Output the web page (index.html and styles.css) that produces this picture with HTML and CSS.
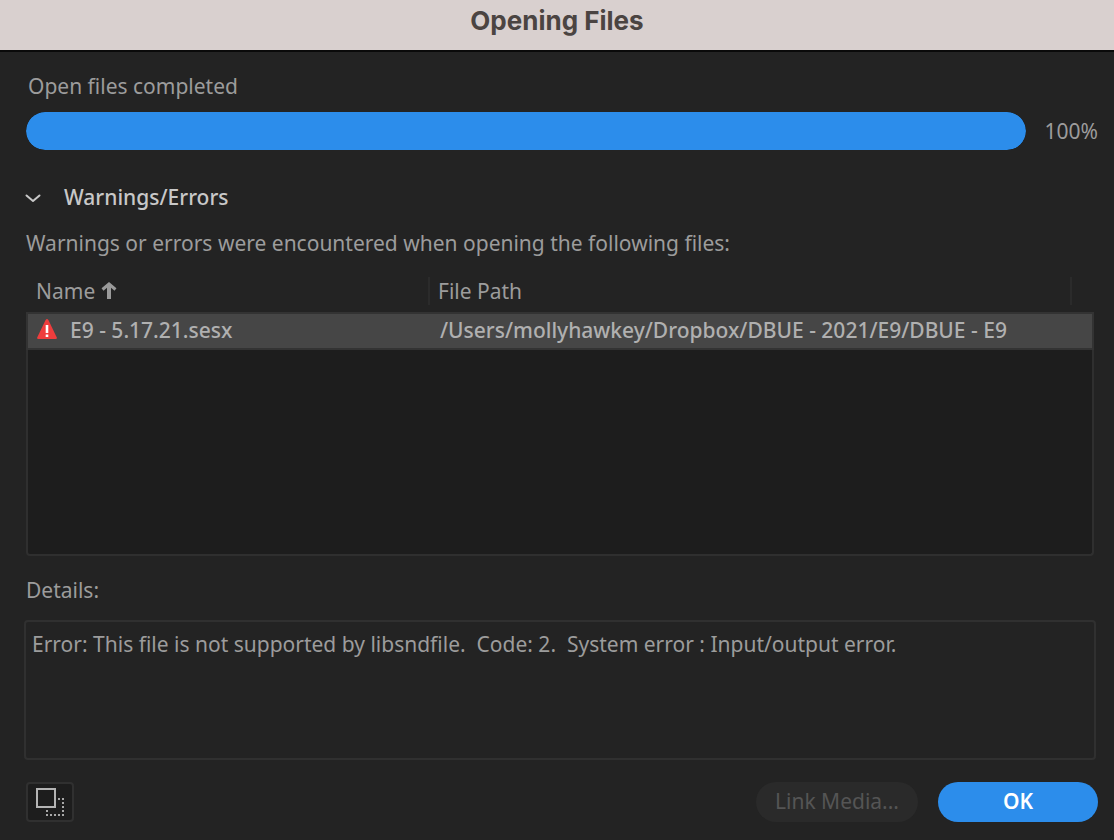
FILE: index.html
```html
<!DOCTYPE html>
<html lang="en">
<head>
  <meta charset="UTF-8">
  <meta name="viewport" content="width=device-width, initial-scale=1.0">
  <title>Opening Files</title>
  <link rel="stylesheet" href="styles.css">
</head>
<body>
  <header class="title-bar">
    <h1>Opening Files</h1>
  </header>

  <main class="dialog">
    <label class="status" for="open-progress">Open files completed</label>
    <div class="progress-row">
      <progress id="open-progress" max="100" value="100"></progress>
      <span class="percent">100%</span>
    </div>

    <button type="button" class="section-toggle" aria-expanded="true" aria-controls="file-list">
      <svg class="chevron" width="16" height="12" viewBox="0 0 16 12" fill="none" stroke="#c8c8c8" stroke-width="2" stroke-linecap="round" stroke-linejoin="round">
        <path d="M1.5 4.5 L8 10 L14.5 4.5"/>
      </svg>
      Warnings/Errors
    </button>
    <p class="message">Warnings or errors were encountered when opening the following files:</p>

    <div class="file-list" id="file-list">
      <table>
        <thead>
          <tr>
            <th class="col-name" scope="col" aria-sort="ascending">
              <span class="heading">Name
                <svg width="16" height="20" viewBox="0 0 16 20" fill="none" stroke="#9a9a9a">
                  <path d="M8 18 V4" stroke-width="4"/>
                  <path d="M1.5 8.5 L8 3 L14.5 8.5" stroke-width="3"/>
                </svg>
              </span>
            </th>
            <th class="col-path" scope="col"><span class="heading">File Path</span></th>
          </tr>
        </thead>
        <tbody>
          <tr>
            <td>
              <span class="file-name">
                <svg width="20" height="22" viewBox="0 0 20 22" role="img" aria-label="Error">
                  <path d="M8.6 1 Q10 -1 11.4 1 L19.8 18.4 Q20.3 20 18.6 20 H1.4 Q-0.3 20 0.2 18.4 Z" fill="#ee3d3d"/>
                  <path d="M8.7 6 H11.3 V14 H8.7 Z M8.7 15.6 H11.3 V18 H8.7 Z" fill="#fff"/>
                </svg>
                E9 - 5.17.21.sesx
              </span>
            </td>
            <td class="path">/Users/mollyhawkey/Dropbox/DBUE - 2021/E9/DBUE - E9</td>
          </tr>
        </tbody>
      </table>
      <div class="list-space"></div>
    </div>

    <label class="details-label" for="details">Details:</label>
    <textarea id="details" class="details" readonly>Error: This file is not supported by libsndfile.  Code: 2.  System error : Input/output error.</textarea>

    <footer class="actions">
      <button type="button" class="icon-button" aria-label="Toggle window size">
        <svg width="30" height="30" viewBox="0 0 30 30">
          <rect x="2" y="2" width="18" height="18" fill="none" stroke="#b4b4b4" stroke-width="2"/>
          <path d="M23 12h2M27 12h2M27 16h2M27 20h2M27 24h2M27 28h2M23 28h2M19 28h2M15 28h2M11 28h2M11 24h2" stroke="#a8a8a8" stroke-width="2"/>
        </svg>
      </button>
      <div class="buttons">
        <button type="button" class="btn" disabled>Link Media...</button>
        <button type="button" class="btn btn-primary">OK</button>
      </div>
    </footer>
  </main>
</body>
</html>
```
FILE: styles.css
```css
* {
  box-sizing: border-box;
}

body {
  margin: 0;
  min-height: 100vh;
  display: flex;
  flex-direction: column;
  background: #232323;
  color: #9c9c9c;
  font-family: "Noto Sans", sans-serif;
  font-size: 21px;
  line-height: 28px;
}

button,
textarea {
  font: inherit;
  color: inherit;
}

.title-bar {
  height: 52px;
  padding-top: 5px;
  background: #d9d0cf;
  border-bottom: 2px solid #0a0a0a;
  text-align: center;
}

.title-bar h1 {
  margin: 0;
  font-family: Inter, sans-serif;
  font-size: 26px;
  font-weight: 700;
  line-height: 32px;
  color: #4b4442;
}

.dialog {
  flex: 1;
  display: flex;
  flex-direction: column;
  padding: 20px 16px 18px 24px;
}

.status {
  margin: 0 0 12px 4px;
}

/* Progress */
.progress-row {
  display: flex;
  align-items: center;
  gap: 16px;
  margin-left: 2px;
}

progress {
  flex: 1;
  min-width: 0;
  height: 38px;
  appearance: none;
  border: none;
  border-radius: 19px;
  overflow: hidden;
  background: #1b1b1b;
}

progress::-webkit-progress-bar {
  background: #1b1b1b;
}

progress::-webkit-progress-value {
  background: #2c8deb;
  border-radius: 19px;
}

.percent {
  width: 56px;
  text-align: right;
}

.section-toggle {
  display: flex;
  align-items: center;
  align-self: flex-start;
  gap: 23px;
  margin: 33px 0 0 1px;
  padding: 0;
  background: none;
  border: none;
  color: #c8c8c8;
  font-weight: 500;
}

.message {
  margin: 18px 0 15px 2px;
}

/* File list */
.file-list {
  flex: 1;
  display: flex;
  flex-direction: column;
  margin: 0 4px 0 2px;
}

table {
  width: 100%;
  table-layout: fixed;
  border-collapse: separate;
  border-spacing: 0;
  text-align: left;
}

th {
  height: 40px;
  padding: 0 0 2px;
  font-weight: 400;
}

.heading {
  display: flex;
  align-items: center;
  gap: 6px;
  padding-left: 8px;
  border-right: 2px solid #2b2b2b;
}

.col-name {
  width: 404px;
}

.col-name .heading {
  padding-left: 10px;
}

.col-path {
  padding-right: 22px;
}

td {
  height: 38px;
  padding: 0 0 2px;
  background: #464646;
  border: 2px solid #333;
  border-width: 2px 0;
  color: #b0b0b0;
  font-weight: 500;
  white-space: nowrap;
}

td:first-child {
  border-left-width: 2px;
}

td:last-child {
  border-right-width: 2px;
}

.file-name {
  display: flex;
  align-items: center;
  gap: 13px;
  padding-left: 9px;
}

.path {
  padding-left: 10px;
  overflow: hidden;
  text-overflow: ellipsis;
}

.list-space {
  flex: 1;
  background: #1d1d1d;
  border: 2px solid #2f2f2f;
  border-top: none;
  border-radius: 0 0 4px 4px;
}

/* Details */
.details-label {
  margin: 20px 0 16px 2px;
}

.details {
  height: 140px;
  margin-right: 2px;
  padding: 8px 6px;
  background: #232323;
  border: 2px solid #303030;
  border-radius: 4px;
  resize: none;
}

/* Footer */
.actions {
  display: flex;
  justify-content: space-between;
  margin: 22px 0 0 2px;
}

.icon-button {
  display: flex;
  align-items: center;
  justify-content: center;
  width: 48px;
  height: 40px;
  padding: 0;
  background: #1d1d1d;
  border: 2px solid #303030;
  border-radius: 4px;
}

.buttons {
  display: flex;
  gap: 20px;
}

.btn {
  min-width: 160px;
  height: 40px;
  padding: 0 19px 2px;
  background: #2a2a2a;
  border: none;
  border-radius: 20px;
  color: #555;
}

.btn-primary {
  background: #2c8deb;
  color: #fff;
  font-weight: 600;
}
```
